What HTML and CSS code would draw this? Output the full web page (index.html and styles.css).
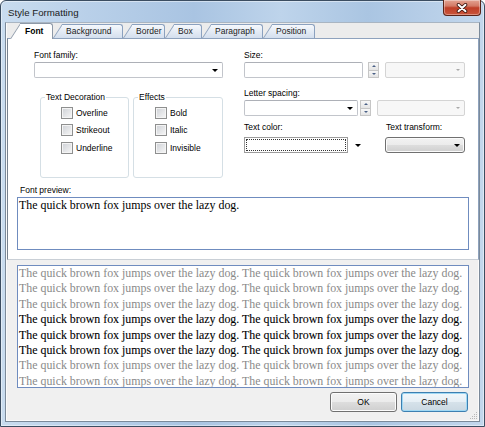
FILE: index.html
```html
<!DOCTYPE html>
<html>
<head>
<meta charset="utf-8">
<title>Style Formatting</title>
<link rel="stylesheet" href="styles.css">
</head>
<body>
<div class="window">
  <div class="titlebar">
    <span class="title">Style Formatting</span>
    <div class="close">
      <svg width="14" height="10" viewBox="0 0 14 10">
        <path d="M3.5 1.8 L10.5 8.2 M10.5 1.8 L3.5 8.2" stroke="#3d1710" stroke-width="3.6" stroke-linecap="round"/>
        <path d="M3.5 1.8 L10.5 8.2 M10.5 1.8 L3.5 8.2" stroke="#ffffff" stroke-width="2" stroke-linecap="round"/>
      </svg>
    </div>
  </div>
  <div class="client">
    <div class="tabstrip">
      <div class="tab sel t-font"><span>Font</span></div>
      <div class="tab t-bg"><span>Background</span></div>
      <div class="tab t-border"><span>Border</span></div>
      <div class="tab t-box"><span>Box</span></div>
      <div class="tab t-para"><span>Paragraph</span></div>
      <div class="tab t-pos"><span>Position</span></div>
    </div>
    <div class="tabpage">
      <div class="top">
        <div class="col-left">
          <div class="lbl">Font family:</div>
          <div class="combo ff"><i class="arrow"></i></div>
          <div class="groups">
            <fieldset class="grp g-deco">
              <legend>Text Decoration</legend>
              <div class="checks">
                <div class="chk"><span class="cb"></span>Overline</div>
                <div class="chk"><span class="cb"></span>Strikeout</div>
                <div class="chk"><span class="cb"></span>Underline</div>
              </div>
            </fieldset>
            <fieldset class="grp g-eff">
              <legend>Effects</legend>
              <div class="checks">
                <div class="chk"><span class="cb"></span>Bold</div>
                <div class="chk"><span class="cb"></span>Italic</div>
                <div class="chk"><span class="cb"></span>Invisible</div>
              </div>
            </fieldset>
          </div>
        </div>
        <div class="col-right">
          <div class="lbl">Size:</div>
          <div class="ctrl-row r1">
            <div class="textbox"></div>
            <div class="spin"><span class="up"><i></i></span><span class="dn"><i></i></span></div>
            <div class="combo dis"><i class="arrow"></i></div>
          </div>
          <div class="lbl m-ls">Letter spacing:</div>
          <div class="ctrl-row r2">
            <div class="combo ls"><i class="arrow"></i></div>
            <div class="spin"><span class="up"><i></i></span><span class="dn"><i></i></span></div>
            <div class="combo dis"><i class="arrow"></i></div>
          </div>
          <div class="pair">
            <div class="field tc">
              <div class="lbl">Text color:</div>
              <div class="colorpick"><span class="swatch"></span><i class="arrow"></i></div>
            </div>
            <div class="field tt">
              <div class="lbl">Text transform:</div>
              <div class="dropbtn"><i class="arrow"></i></div>
            </div>
          </div>
        </div>
      </div>
      <div class="pv-label">Font preview:</div>
      <div class="pv-box">The quick brown fox jumps over the lazy dog.</div>
    </div>
    <div class="pv2">
      <p class="dim">The quick brown fox jumps over the lazy dog. The quick brown fox jumps over the lazy dog.</p>
      <p class="dim">The quick brown fox jumps over the lazy dog. The quick brown fox jumps over the lazy dog.</p>
      <p class="dim">The quick brown fox jumps over the lazy dog. The quick brown fox jumps over the lazy dog.</p>
      <p class="cur">The quick brown fox jumps over the lazy dog. The quick brown fox jumps over the lazy dog.</p>
      <p class="cur">The quick brown fox jumps over the lazy dog. The quick brown fox jumps over the lazy dog.</p>
      <p class="cur">The quick brown fox jumps over the lazy dog. The quick brown fox jumps over the lazy dog.</p>
      <p class="dim">The quick brown fox jumps over the lazy dog. The quick brown fox jumps over the lazy dog.</p>
      <p class="dim">The quick brown fox jumps over the lazy dog. The quick brown fox jumps over the lazy dog.</p>
    </div>
    <div class="buttons">
      <div class="btn">OK</div>
      <div class="btn def">Cancel</div>
    </div>
    <svg class="grip" width="8" height="8" viewBox="0 0 8 8">
      <g fill="#b8b8b8">
        <rect x="6" y="0" width="1" height="1"/>
        <rect x="4" y="2" width="1" height="1"/><rect x="6" y="2" width="1" height="1"/>
        <rect x="2" y="4" width="1" height="1"/><rect x="4" y="4" width="1" height="1"/><rect x="6" y="4" width="1" height="1"/>
        <rect x="0" y="6" width="1" height="1"/><rect x="2" y="6" width="1" height="1"/><rect x="4" y="6" width="1" height="1"/><rect x="6" y="6" width="1" height="1"/>
      </g>
    </svg>
  </div>
</div>
</body>
</html>
```

FILE: styles.css
```css
* { box-sizing: border-box; }
html, body { margin: 0; padding: 0; }
body {
  width: 485px;
  height: 427px;
  overflow: hidden;
  background: #ffffff;
  font-family: "Liberation Sans", Arial, sans-serif;
  font-size: 8.5px;
  color: #000;
}

/* window frame */
.window {
  width: 485px;
  height: 427px;
  border: 1px solid #3b4d61;
  border-radius: 6px 6px 0 0;
  background: linear-gradient(90deg, #c9dcef 0%, #b9d0e9 18%, #a9c4e2 40%, #bed4eb 58%, #aac5e2 76%, #c3d7ed 100%);
  box-shadow: inset 0 0 0 1px rgba(255, 255, 255, 0.45);
  padding: 0 4px 4px 4px;
  display: flex;
  flex-direction: column;
}
.titlebar {
  height: 21px;
  flex: none;
  display: flex;
  align-items: flex-start;
}
.title {
  margin: 6px 0 0 3px;
  font-size: 9.7px;
  line-height: 11px;
  color: #1b1b1b;
}
.close {
  margin: -1px -1px 0 auto;
  width: 38px;
  height: 16px;
  border: 1px solid #5a2318;
  border-top: none;
  border-radius: 0 0 4px 4px;
  background: linear-gradient(#e3a392 0%, #d37a66 40%, #bf3f28 52%, #c9553b 100%);
  box-shadow: inset 0 0 0 1px rgba(255, 255, 255, 0.35);
  display: flex;
  align-items: center;
  justify-content: center;
}

/* client area */
.client {
  flex: 1;
  position: relative;
  border: 1px solid #7b8a9a;
  border-top-color: #a9b5c2;
  background: #f0f0f0;
  box-shadow: inset 0 0 0 1px #fbfbfb;
  display: flex;
  flex-direction: column;
}

/* tabs */
.tabstrip {
  position: relative;
  z-index: 1;
  height: 15px;
  margin-left: 1px;
  padding-left: 3px;
  background: #ececec;
  display: flex;
  align-items: flex-end;
}
.tab {
  position: relative;
  z-index: 1;
  flex: none;
  height: 14px;
  padding: 2px 0 0 13px;
  line-height: 11px;
  color: #1c1c1c;
  white-space: nowrap;
}
.tab::before,
.tab::after {
  content: "";
  position: absolute;
  z-index: -1;
  background: linear-gradient(#f5f8fc, #d4dfee);
}
.tab::before {
  left: 0;
  bottom: 0;
  width: 16px;
  height: 100%;
  border-left: 1px solid #8ba1bf;
  transform: skewX(-33deg);
  transform-origin: 0 100%;
}
.tab::after {
  left: 9px;
  right: 0;
  top: 0;
  bottom: 0;
  border-top: 1px solid #8ba1bf;
  border-right: 1px solid #8ba1bf;
  border-top-right-radius: 3px;
}
.tab.sel {
  z-index: 2;
  height: 16px;
  margin-bottom: -1px;
  padding: 3px 0 0 15px;
  font-weight: bold;
  color: #000;
}
.tab.sel::before,
.tab.sel::after {
  background: #ffffff;
  border-color: #8d99a8;
}
.tab.sel::after { left: 10px; }
.t-font { width: 43px; }
.t-bg { width: 70px; }
.t-border { width: 42px; }
.t-box { width: 37px; }
.t-para { width: 61px; }
.t-pos { width: 52px; }

.tabpage {
  flex: none;
  height: 222px;
  margin-left: 1px;
  border: 1px solid #8ea2bd;
  border-left-color: #76818e;
  border-bottom-color: #c9cfd6;
  background: #ffffff;
  padding: 11px 0 0 9px;
}

.top {
  display: flex;
  gap: 21px;
  margin-left: 17px;
}
.col-left { width: 189px; }
.col-right { width: 221px; }
.lbl {
  height: 10px;
  line-height: 10px;
  white-space: nowrap;
}

.arrow {
  display: block;
  width: 0;
  height: 0;
  border-left: 3px solid transparent;
  border-right: 3px solid transparent;
  border-top: 3px solid #000;
}
.combo {
  height: 16px;
  border: 1px solid #c2c5cb;
  border-top-color: #adb0b7;
  border-radius: 2px;
  background: #fff;
  display: flex;
  align-items: center;
  justify-content: flex-end;
  padding-right: 4px;
}
.ff { margin-top: 2px; }

.groups {
  display: flex;
  gap: 4px;
  margin: 14px 0 0 6px;
}
fieldset.grp {
  margin: 0;
  min-width: 0;
  padding: 0 0 20px 4px;
  border: 1px solid #d5dfe5;
  border-radius: 3px;
}
.g-deco { width: 89px; }
.g-eff { width: 90px; }
legend {
  padding: 0 1px;
  line-height: 10px;
  font-size: 8.5px;
}
.checks {
  margin-left: 16px;
  padding-top: 2px;
}
.g-eff .checks { margin-left: 17px; }
.chk {
  display: flex;
  align-items: center;
  height: 17.5px;
  white-space: nowrap;
}
.cb {
  width: 12px;
  height: 12px;
  margin-right: 3px;
  border: 1px solid #8e8f8f;
  background: linear-gradient(135deg, #cdd0d5, #f7f7f7);
  box-shadow: inset 0 0 0 1px #f4f4f4;
}

/* right column */
.ctrl-row {
  display: flex;
  height: 16px;
  margin-top: 2px;
}
.textbox {
  width: 119px;
  height: 16px;
  border: 1px solid #c2c5cb;
  border-top-color: #adb0b7;
  border-radius: 2px;
  background: #fff;
}
.spin {
  width: 11px;
  margin-left: 5px;
  display: flex;
  flex-direction: column;
}
.spin span {
  flex: 1;
  border: 1px solid #c6c6c6;
  background: linear-gradient(#f8f8f8, #e4e4e4);
  display: flex;
  align-items: center;
  justify-content: center;
}
.spin .dn { border-top: none; }
.spin .up i {
  display: block;
  width: 0;
  height: 0;
  border-left: 2px solid transparent;
  border-right: 2px solid transparent;
  border-bottom: 2px solid #4a6086;
}
.spin .dn i {
  display: block;
  width: 0;
  height: 0;
  border-left: 2px solid transparent;
  border-right: 2px solid transparent;
  border-top: 2px solid #4a6086;
}
.combo.dis {
  width: 80px;
  margin-left: 6px;
  background: #f7f7f7;
  border-color: #d4d4d4;
}
.combo.dis .arrow {
  border-left-width: 2.5px;
  border-right-width: 2.5px;
  border-top: 2.5px solid #a9a9a9;
}
.m-ls { margin-top: 10px; }
.combo.ls { width: 114px; }
.r2 .spin { margin-left: 2px; }
.r2 .combo.dis { width: 88px; margin-left: 6px; }

.pair {
  display: flex;
  gap: 21px;
  margin-top: 6px;
}
.field.tc { width: 120px; }
.field.tt { width: 80px; }
.field.tt .lbl { padding-left: 1px; }
.colorpick {
  margin-top: 5px;
  height: 16px;
  display: flex;
  align-items: center;
}
.swatch {
  width: 104px;
  height: 16px;
  border: 1px solid #9c9c9c;
  background: #fff;
  outline: 1px dotted #333;
  outline-offset: -3px;
}
.colorpick .arrow { margin-left: 7px; }
.dropbtn {
  margin-top: 5px;
  height: 16px;
  border: 1px solid #707070;
  border-radius: 3px;
  background: linear-gradient(#f2f2f2 0%, #ebebeb 50%, #dddddd 51%, #cfcfcf 100%);
  box-shadow: inset 0 0 0 1px #fbfbfb;
  display: flex;
  align-items: center;
  justify-content: flex-end;
  padding-right: 4px;
}

/* preview */
.pv-label {
  margin-top: 7px;
  padding-left: 3px;
  line-height: 10px;
}
.pv-box {
  width: 452px;
  height: 53px;
  margin-top: 2px;
  border: 1px solid #6f8cbf;
  background: #fff;
  padding: 0 1px;
  font-family: "Liberation Serif", "Times New Roman", serif;
  font-size: 11.9px;
  line-height: 15px;
  white-space: nowrap;
}

.pv2 {
  flex: none;
  width: 452px;
  height: 123px;
  margin: 5px 0 0 11px;
  border: 1px solid #6f8cbf;
  background: #fff;
  padding: 0 1px;
  overflow: hidden;
  font-family: "Liberation Serif", "Times New Roman", serif;
  font-size: 11.9px;
  line-height: 15.4px;
  white-space: nowrap;
}
.pv2 p { margin: 0; }
.pv2 .dim { color: #8a8a8a; }
.pv2 .cur { color: #000; -webkit-text-stroke: 0.1px #000; }

/* buttons */
.buttons {
  display: flex;
  justify-content: flex-end;
  gap: 4px;
  margin: 4px 11px 0 0;
}
.btn {
  width: 67px;
  height: 20px;
  border: 1px solid #707070;
  border-radius: 3px;
  background: linear-gradient(#f2f2f2 0%, #ebebeb 50%, #dddddd 51%, #cfcfcf 100%);
  box-shadow: inset 0 0 0 1px #fcfcfc;
  display: flex;
  align-items: center;
  justify-content: center;
  font-size: 8.5px;
}
.btn.def {
  border-color: #3c7fb1;
  box-shadow: inset 0 0 0 1px #9fd8f4;
  background: linear-gradient(#f1f7fb 0%, #e6eff5 50%, #d6e2ea 51%, #cad8e2 100%);
}
.grip {
  position: absolute;
  right: 1px;
  bottom: 1px;
}
```
